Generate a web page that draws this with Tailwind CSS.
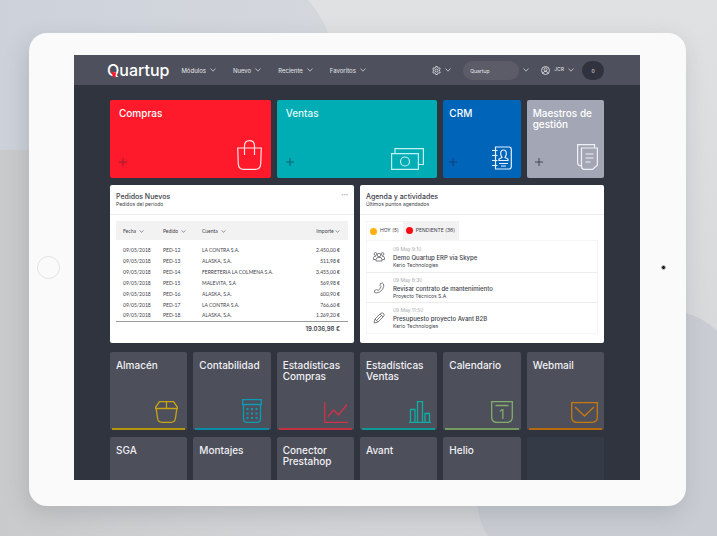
<!DOCTYPE html>
<html lang="es">
<head>
  <meta charset="UTF-8" />
  <meta name="viewport" content="width=device-width, initial-scale=1.0" />
  <title>Quartup</title>
  <script src="https://cdn.jsdelivr.net/npm/@tailwindcss/browser@4"></script>
</head>
<body class="relative h-screen overflow-hidden bg-[#d5d7d9] pt-[33px] pb-[30px] pl-[29px] pr-[31px] font-[Inter,sans-serif]">
  <!-- Backdrop -->
  <svg class="absolute inset-0 w-full h-full" viewBox="0 0 717 536" preserveAspectRatio="none" aria-hidden="true">
    <defs>
      <linearGradient id="sky" x1="0" y1="0" x2="0" y2="1"><stop offset="0" stop-color="#dfe1e2" /><stop offset="1" stop-color="#d2d4d7" /></linearGradient>
      <linearGradient id="disc" x1="0" y1="0" x2="1" y2="0"><stop offset="0" stop-color="#cdd1da" /><stop offset="1" stop-color="#d4d8dd" /></linearGradient>
      <linearGradient id="shade" x1="0" y1="0" x2="1" y2="0"><stop offset="0" stop-color="#c9cacb" /><stop offset="1" stop-color="#d5d7d9" stop-opacity="0" /></linearGradient>
    </defs>
    <path d="M0 0H717V536H0z" fill="url(#sky)" />
    <path d="M0 150H480V536H0z" fill="url(#shade)" />
    <path d="M0 0H308Q321 14 328 33L300 150H0z" fill="url(#disc)" />
    <path d="M488 536Q478 522 477 500L560 380L686 313Q704 318 717 331V536z" fill="#c9cdd3" />
  </svg>
  <svg class="hidden">
    <symbol id="chevron" viewBox="0 0 6 4"><path d="M.5 .5L3 3.2L5.500 .5" fill="none" stroke="currentColor" stroke-width=".7" /></symbol>
    <symbol id="plus" viewBox="0 0 8 8"><path d="M4 0V8M0 4H8" stroke="currentColor" stroke-width=".9" /></symbol>
  </svg>

  <!-- Tablet -->
  <div class="relative flex h-full rounded-[18px] bg-[#fafafb] pt-[22px] pb-[26px] shadow-[-3px_8px_22px_rgba(90,95,105,0.22)]">
    <div class="flex w-[45px] shrink-0 items-center justify-center pr-1.5">
      <span class="size-[23px] rounded-full border border-[#e2e2e3]"></span>
    </div>

    <div class="min-w-0 flex-1 overflow-hidden bg-[#30343f] text-white">
      <header class="flex h-[30px] items-center bg-[#4e515d] pl-[33px] pr-9 text-[6px] text-[#e6e7ea]">
        <a href="#" class="relative text-[16px] leading-5 font-medium text-white">Quartup
          <svg class="absolute left-1 top-[11px] h-[7px] w-[5px]" viewBox="0 0 5 7"><path d="M0 0L5 2L4 7L2 6z" fill="#ff1a2b" /></svg>
        </a>
        <nav class="ml-3 flex gap-[17px]">
          <button class="flex items-center gap-1">Módulos <svg class="h-1 w-1.5"><use href="#chevron" /></svg></button>
          <button class="flex items-center gap-1">Nuevo <svg class="h-1 w-1.5"><use href="#chevron" /></svg></button>
          <button class="flex items-center gap-1">Reciente <svg class="h-1 w-1.5"><use href="#chevron" /></svg></button>
          <button class="flex items-center gap-1">Favoritos <svg class="h-1 w-1.5"><use href="#chevron" /></svg></button>
        </nav>
        <div class="ml-auto flex items-center">
          <button class="flex items-center gap-1" aria-label="Ajustes">
            <svg class="size-[9px]" viewBox="0 0 18 18" fill="none" stroke="currentColor" stroke-width="1.700"><path d="M7.500 1h3l.6 2.200 1.700 1 2.200-.6 1.500 2.600-1.600 1.600v2.400l1.600 1.600-1.500 2.600-2.200-.6-1.700 1-.6 2.200h-3l-.6-2.200-1.700-1-2.200.6-1.500-2.600 1.600-1.600V7.800L1.500 6.200 3 3.600l2.200.6 1.700-1z" /><circle cx="9" cy="9" r="3" /></svg>
            <svg class="h-1 w-1.5"><use href="#chevron" /></svg>
          </button>
          <label class="ml-3 flex items-center gap-1">
            <select aria-label="Empresa" class="h-[19px] w-14 appearance-none rounded-full bg-[#5b5c68] px-[7px] pt-px text-[5px] leading-[18px]"><option>Quartup</option></select>
            <svg class="h-1 w-1.5"><use href="#chevron" /></svg>
          </label>
          <button class="ml-3 flex items-center gap-1 text-[5px]">
            <svg class="size-[9px]" viewBox="0 0 18 18" fill="none" stroke="currentColor" stroke-width="1.700"><circle cx="9" cy="9" r="8" /><circle cx="9" cy="7" r="3" /><path d="M3.500 14.500Q5 10.800 9 10.800T14.500 14.500" /></svg>
            JCR <svg class="h-1 w-1.5"><use href="#chevron" /></svg>
          </button>
          <button class="ml-2 h-[19px] w-[22px] rounded-full bg-[#30333e] pt-px text-[5px] leading-[18px]">0</button>
        </div>
      </header>

      <main class="px-9 pt-[15px]">
        <!-- Main modules -->
        <section class="grid grid-cols-6 gap-1.5 text-[10px] leading-[11px] font-medium">
          <article class="col-span-2 flex h-[78px] flex-col justify-between rounded-xs bg-[#ff1a2b] px-[9px] py-2">
            <h2><a href="#">Compras</a></h2>
            <div class="flex items-end justify-between">
              <button aria-label="Nueva compra" class="pb-1 text-[#8b1f33]"><svg class="size-2"><use href="#plus" /></svg></button>
              <svg class="h-[30px] w-[25px]" viewBox="0 0 25 30" fill="none" stroke="#ffe3e5" stroke-width="1.200"><path d="M.7 8H24.300L23.700 24Q23.300 29.300 18.500 29.300H6.500Q1.700 29.300 1.300 24zM7.500 15V6Q7.500 .7 12.500 .7T17.500 6V15" /></svg>
            </div>
          </article>
          <article class="col-span-2 flex h-[78px] flex-col justify-between rounded-xs bg-[#00adb5] px-[9px] py-2">
            <h2 class="text-[#e0fafa]"><a href="#">Ventas</a></h2>
            <div class="flex items-end justify-between">
              <button aria-label="Nueva venta" class="pb-1 text-[#0b5c66]"><svg class="size-2"><use href="#plus" /></svg></button>
              <svg class="mr-1 h-[22px] w-[33px]" viewBox="0 0 33 22" fill="none" stroke="#c4f1f3" stroke-width="1.200"><path d="M.6 5.600H27.400V21.400H.6zM4 5.600V.6H32.400V16.500H27.400" /><circle cx="14" cy="13.500" r="4.500" /></svg>
            </div>
          </article>
          <article class="flex h-[78px] flex-col justify-between rounded-xs bg-[#0064b9] px-1.5 py-2">
            <h2><a href="#">CRM</a></h2>
            <div class="flex items-end justify-between">
              <button aria-label="Nuevo contacto" class="pb-1 text-[#123b6f]"><svg class="size-2"><use href="#plus" /></svg></button>
              <svg class="mr-[3px] h-6 w-5" viewBox="0 0 20 24" fill="none" stroke="#e6f1ff" stroke-width="1.200"><path d="M3.500 1H17Q19.300 1 19.300 3.500V20.500Q19.300 23 17 23H3.500zM0 4.500H5.500M0 9.500H5.500M0 14.500H5.500M0 19.500H5.500M7 17.500H16M9 20H14" /><path d="M7 14.500V13L10 11.500Q8.700 9.500 8.700 7.500 8.700 4 11.500 4T14.300 7.500Q14.300 9.500 13 11.500L16 13V14.500z" /></svg>
            </div>
          </article>
          <article class="flex h-[78px] flex-col justify-between rounded-xs bg-[#a3a7b5] px-1.5 py-2">
            <h2><a href="#">Maestros de gestión</a></h2>
            <div class="flex items-end justify-between">
              <button aria-label="Nuevo maestro" class="pl-0.5 pb-1 text-[#3b3f4c]"><svg class="size-2"><use href="#plus" /></svg></button>
              <svg class="h-[26px] w-[21px]" viewBox="0 0 21 26" fill="none" stroke="#eff0f5" stroke-width="1.200"><path d="M4.500 4H20.400V21L15.500 25.400H7.500Q4.500 25.400 4.500 22zM17.500 4V.6H.6V19Q.6 21.500 4.500 22M8.500 10H16.500M8.500 14H16.500M8.500 18H13.500" /></svg>
            </div>
          </article>
        </section>

        <!-- Panels -->
        <section class="mt-[7px] grid grid-cols-2 gap-1.5 text-[#3c3e47]">
          <article class="h-[158px] rounded-xs bg-white">
            <header class="flex h-[30px] justify-between border-b border-[#ececee] px-1.5 pt-[7px]">
              <div>
                <h2 class="text-[7px] leading-[9px] font-medium">Pedidos Nuevos</h2>
                <p class="text-[5px] leading-[6px]">Pedidos del periodo</p>
              </div>
              <button aria-label="Más opciones" class="h-1.5 text-[4px] leading-[6px] text-[#a5a6ab]">•••</button>
            </header>
            <div class="px-1.5 pt-1.5">
              <table class="w-full text-left font-[Lato,sans-serif] text-[5px] leading-[6px]">
                <thead class="bg-[#f2f2f3]">
                  <tr class="h-[19px]">
                    <th class="w-10 pl-[7px] font-normal">Fecha <svg class="ml-0.5 inline h-[3px] w-[5px]"><use href="#chevron" /></svg></th>
                    <th class="w-[39px] pl-[7px] font-normal">Pedido <svg class="ml-0.5 inline h-[3px] w-[5px]"><use href="#chevron" /></svg></th>
                    <th class="pl-[7px] font-normal">Cuenta <svg class="ml-0.5 inline h-[3px] w-[5px]"><use href="#chevron" /></svg></th>
                    <th class="pr-2 text-right font-normal">Importe <svg class="inline h-[3px] w-[5px]"><use href="#chevron" /></svg></th>
                  </tr>
                </thead>
                <tbody id="orders">
                  <tr class="h-1"><td colspan="4"></td></tr>
                </tbody>
                <tfoot>
                  <tr class="h-[15px] border-t border-[#9a9ba0]"><td colspan="4" class="pr-2 text-right font-[Inter,sans-serif] text-[6px] font-semibold">19.036,98 €</td></tr>
                </tfoot>
              </table>
            </div>
          </article>

          <article class="h-[158px] rounded-xs bg-white">
            <header class="h-[30px] border-b border-[#ececee] px-1.5 pt-[7px]">
              <h2 class="text-[7px] leading-[9px] font-medium">Agenda y actividades</h2>
              <p class="text-[5px] leading-[6px]">Últimos puntos agendados</p>
            </header>
            <div class="px-1.5 pt-1.5">
              <div role="tablist" class="flex h-[19px] text-[5px]">
                <button role="tab" aria-selected="true" class="flex items-center gap-[3px] border-l border-t border-[#f5f5f6] pl-[3px] pr-1"><span class="size-[7px] rounded-full bg-[#fdb10a]"></span>HOY (5)</button>
                <button role="tab" aria-selected="false" class="flex items-center gap-[3px] bg-[#f2f2f3] px-[3px] pr-1"><span class="size-[7px] rounded-full bg-[#fa0a14]"></span>PENDIENTE (36)</button>
              </div>
              <ul class="divide-y divide-[#ececee] border border-[#f5f5f6]">
                <li class="flex h-[32px] items-center gap-2 pl-1.5">
                  <svg class="h-3 w-3" viewBox="0 0 24 24" fill="none" stroke="#55575f" stroke-width="1.500"><circle cx="12" cy="8" r="3.500" /><circle cx="5" cy="6" r="2.800" /><circle cx="19" cy="6" r="2.800" /><path d="M6 20V17Q6 12.500 12 12.500T18 17V20zM5.500 17H1V13.500Q1 10.500 6 10.500M18.500 17H23V13.500Q23 10.500 18 10.500" /></svg>
                  <div>
                    <time class="block text-[5px] leading-[7px] font-light text-[#8b8d94]">09 May 9:10</time>
                    <a href="#" class="block text-[6px] leading-[9px] font-medium">Demo Quartup ERP vía Skype</a>
                    <p class="text-[5px] leading-[6px]">Kerio Technologies</p>
                  </div>
                </li>
                <li class="flex h-[30px] items-center gap-2 pl-1.5">
                  <svg class="h-3 w-3" viewBox="0 0 24 24" fill="none" stroke="#55575f" stroke-width="1.500"><path d="M15 3Q19 0 21 4T19 15Q13 22 6 22 1 21 3 17L7 15 10 17Q15 14 16 9L14 7z" /></svg>
                  <div>
                    <time class="block text-[5px] leading-[7px] font-light text-[#8b8d94]">09 May 8:30</time>
                    <a href="#" class="block text-[6px] leading-[9px] font-medium">Revisar contrato de mantenimiento</a>
                    <p class="text-[5px] leading-[6px]">Proyecto Técnicos S.A</p>
                  </div>
                </li>
                <li class="flex h-[30px] items-center gap-2 pl-1.5">
                  <svg class="h-3 w-3" viewBox="0 0 24 24" fill="none" stroke="#55575f" stroke-width="1.500"><path d="M2 22L4 14 15 3Q18 0 21 3T21 9L10 20zM4 14L10 20M14 4L20 10M7 17L17 7" /></svg>
                  <div>
                    <time class="block text-[5px] leading-[7px] font-light text-[#8b8d94]">09 May 11:50</time>
                    <a href="#" class="block text-[6px] leading-[9px] font-medium">Presupuesto proyecto Avant B2B</a>
                    <p class="text-[5px] leading-[6px]">Kerio Technologies</p>
                  </div>
                </li>
              </ul>
            </div>
          </article>
        </section>

        <!-- Secondary modules -->
        <section class="mt-[9px] grid grid-cols-6 gap-x-1.5 gap-y-[7px] text-[10px] leading-[11px] font-medium text-[#f0f0f3]">
          <a href="#" class="flex h-[78px] flex-col justify-between rounded-xs bg-[#4d4f5b] px-0.5 pt-2"><span class="px-1">Almacén</span>
            <div class="border-b-2 border-[#b3940b] pb-[5px]">
              <svg class="ml-auto mr-[7px] h-[22px] w-[23px]" viewBox="0 0 23 22" fill="none" stroke="#c9a413" stroke-width="1.300"><path d="M4.500 .7H18.500L22.300 6V7.500H.7V6zM1.200 7.500L2.500 17Q3 21.300 7 21.300H16Q20 21.300 20.500 17L21.800 7.500M11.500 .7V7.500" /></svg>
            </div>
          </a>
          <a href="#" class="flex h-[78px] flex-col justify-between rounded-xs bg-[#4d4f5b] px-0.5 pt-2"><span class="px-1">Contabilidad</span>
            <div class="border-b-2 border-[#0b8ba6] pb-[5px]">
              <svg class="ml-auto mr-[7px] h-6 w-5" viewBox="0 0 20 24" fill="none" stroke="#0c9bb5" stroke-width="1.300"><path d="M.7 .7H19.300V5.500H.7zM1.500 5.500V19.500Q1.500 23.300 5 23.300H15Q18.500 23.300 18.500 19.500V5.500" /><path d="M4.500 10H6.500M9 10H11M13.500 10H15.500M4.500 14.500H6.500M9 14.500H11M13.500 14.500H15.500M4.500 19H6.500M9 19H11M13.500 19H15.500" stroke-width="2" /></svg>
            </div>
          </a>
          <a href="#" class="flex h-[78px] flex-col justify-between rounded-xs bg-[#4d4f5b] px-0.5 pt-2"><span class="px-1">Estadísticas Compras</span>
            <div class="border-b-2 border-[#c23242] pb-[5px]">
              <svg class="ml-auto mr-1 h-[21px] w-6" viewBox="0 0 24 21" fill="none" stroke="#cf3347" stroke-width="1.300"><path d="M.7 0V20.300H24M4 14.500L9.500 8 14.500 13 23 2.500" /></svg>
            </div>
          </a>
          <a href="#" class="flex h-[78px] flex-col justify-between rounded-xs bg-[#4d4f5b] px-0.5 pt-2"><span class="px-1">Estadísticas Ventas</span>
            <div class="border-b-2 border-[#109a93] pb-[5px]">
              <svg class="ml-auto mr-1 h-[22px] w-[22px]" viewBox="0 0 22 22" fill="none" stroke="#10ada4" stroke-width="1.300"><path d="M0 21.300H22M1.500 21V8.500H6V21M8.500 21V.7H13.500V21M16 21V12.500H20.500V21" /></svg>
            </div>
          </a>
          <a href="#" class="flex h-[78px] flex-col justify-between rounded-xs bg-[#4d4f5b] px-0.5 pt-2"><span class="px-1">Calendario</span>
            <div class="border-b-2 border-[#749c5f] pb-[5px]">
              <svg class="ml-auto mr-1.5 h-[22px] w-[22px]" viewBox="0 0 22 22" fill="none" stroke="#83ad6c" stroke-width="1.300"><path d="M.7 .7H21.300V16Q21.300 21.300 16 21.300H6Q.7 21.300 .7 16zM4.500 4.500H17.500" /><text x="11" y="18" text-anchor="middle" font-size="13" font-weight="400" fill="#83ad6c" stroke="none">1</text></svg>
            </div>
          </a>
          <a href="#" class="flex h-[78px] flex-col justify-between rounded-xs bg-[#4d4f5b] px-0.5 pt-2"><span class="px-1">Webmail</span>
            <div class="border-b-2 border-[#b56a0d] pb-[5px]">
              <svg class="ml-auto mr-1 h-[21px] w-[27px]" viewBox="0 0 27 21" fill="none" stroke="#c9780f" stroke-width="1.300"><path d="M.7 .7H26.300V15Q26.300 20.300 21 20.300H6Q.7 20.300 .7 15zM4 5L13.500 14 23 5" /></svg>
            </div>
          </a>
          <a href="#" class="h-[78px] rounded-xs bg-[#4d4f5b] px-1.5 pt-2">SGA</a>
          <a href="#" class="h-[78px] rounded-xs bg-[#4d4f5b] px-1.5 pt-2">Montajes</a>
          <a href="#" class="h-[78px] rounded-xs bg-[#4d4f5b] px-1.5 pt-2">Conector Prestahop</a>
          <a href="#" class="h-[78px] rounded-xs bg-[#4d4f5b] px-1.5 pt-2">Avant</a>
          <a href="#" class="h-[78px] rounded-xs bg-[#4d4f5b] px-1.5 pt-2">Helio</a>
          <div class="h-[78px] rounded-xs bg-[#353b46]"></div>
        </section>
      </main>
    </div>

    <div class="flex w-[46px] shrink-0 items-center justify-center">
      <span class="size-[5px] rounded-full border border-[#b9bdba] bg-[#14171c]"></span>
    </div>
  </div>

  <script>
    const orders = [
      ['09/05/2018', 'PED-12', 'LA CONTRA S.A.', '2.450,00 €'],
      ['09/05/2018', 'PED-13', 'ALASKA, S.A.', '511,98 €'],
      ['09/05/2018', 'PED-14', 'FERRETERIA LA COLMENA S.A.', '3.455,00 €'],
      ['09/05/2018', 'PED-15', 'MALEVITA, S.A', '569,98 €'],
      ['09/05/2018', 'PED-16', 'ALASKA, S.A.', '600,90 €'],
      ['09/05/2018', 'PED-17', 'LA CONTRA S.A.', '766,60 €'],
      ['09/05/2018', 'PED-18', 'ALASKA, S.A.', '1.269,20 €'],
    ];
    const tbody = document.getElementById('orders');
    orders.forEach(([date, code, account, amount]) => {
      tbody.insertAdjacentHTML('beforeend', `
        <tr class="h-[11px]">
          <td class="pl-[7px]">${date}</td>
          <td class="pl-[7px]">${code}</td>
          <td class="pl-[7px] whitespace-nowrap">${account}</td>
          <td class="pr-2 text-right">${amount}</td>
        </tr>`);
    });
  </script>
</body>
</html>
